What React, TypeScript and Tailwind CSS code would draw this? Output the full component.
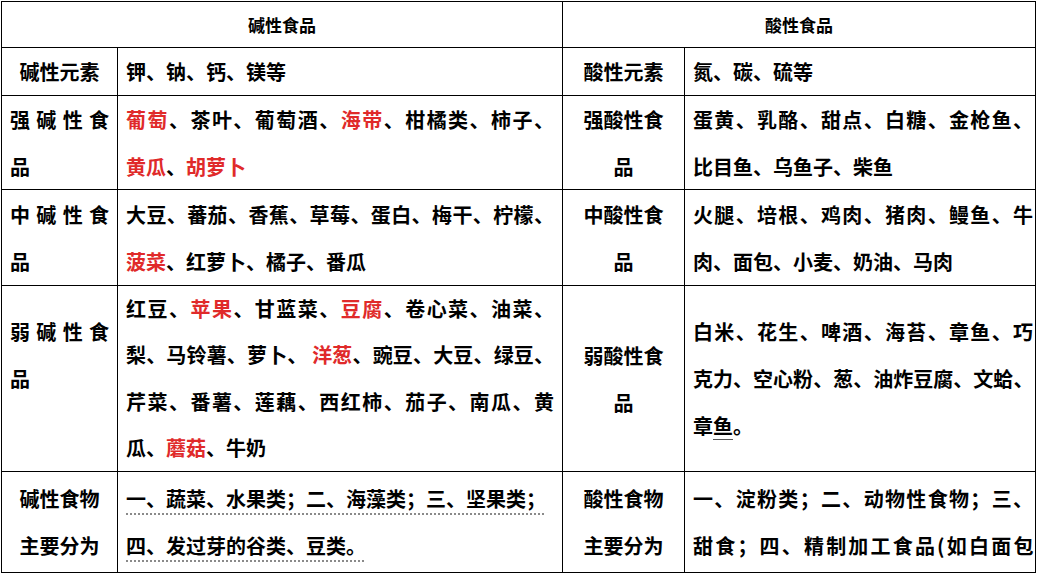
import type { ReactNode } from "react";

type Piece = string | { r: string };

// one printed line of a cell; "full" lines are stretched edge to edge like Word does
function Line({
  parts,
  full,
  tall,
  tight,
}: {
  parts: Piece[];
  full?: boolean;
  tall?: boolean;
  tight?: boolean;
}) {
  const base = tall ? "h-[46.5px] leading-[46.5px]" : "h-[47px] leading-[47px]";
  const align = full ? "text-justify [text-align-last:justify]" : "";
  return (
    <div className={`${base} ${align} whitespace-nowrap ${tight ? "tracking-[-0.4px]" : ""}`}>
      {parts.map((p, i) =>
        typeof p === "string" ? (
          <span key={i}>{p}</span>
        ) : (
          <span key={i} className="text-[#e02a2a]">
            {p.r}
          </span>
        ),
      )}
    </div>
  );
}

function Cell({
  children,
  center,
  span,
  pr,
}: {
  children: ReactNode;
  center?: boolean;
  span?: boolean;
  pr?: boolean;
}) {
  return (
    <div
      className={`flex flex-col justify-center border-r border-b border-black pl-2 ${pr ? "pr-[2px]" : "pr-2"} ${
        center ? "items-center text-center" : ""
      } ${span ? "col-span-2" : ""}`}
    >
      {children}
    </div>
  );
}

export default function App() {
  return (
    <div className="min-h-screen bg-white pt-[1px] pl-[1px] text-black [font-family:'Noto_Sans_CJK_SC','Liberation_Sans',sans-serif]">
      <div className="grid w-[1035px] grid-cols-[116px_445px_122px_351px] grid-rows-[46px_48px_94px_96px_186px_101px] border-t border-l border-black text-[20px] font-bold">
        {/* header */}
        <Cell center span>
          <div className="text-[17px] leading-[45px]">碱性食品</div>
        </Cell>
        <Cell center span>
          <div className="text-[17px] leading-[45px]">酸性食品</div>
        </Cell>

        {/* elements */}
        <Cell center>
          <Line parts={["碱性元素"]} />
        </Cell>
        <Cell>
          <Line parts={["钾、钠、钙、镁等"]} />
        </Cell>
        <Cell center>
          <Line parts={["酸性元素"]} />
        </Cell>
        <Cell>
          <Line parts={["氮、碳、硫等"]} />
        </Cell>

        {/* strong */}
        <Cell>
          <Line parts={["强碱性食"]} full />
          <Line parts={["品"]} />
        </Cell>
        <Cell>
          <Line
            parts={[{ r: "葡萄" }, "、茶叶、葡萄酒、", { r: "海带" }, "、柑橘类、柿子、"]}
            full
          />
          <Line parts={[{ r: "黄瓜" }, "、", { r: "胡萝卜" }]} />
        </Cell>
        <Cell center>
          <Line parts={["强酸性食"]} />
          <Line parts={["品"]} />
        </Cell>
        <Cell pr>
          <Line parts={["蛋黄、乳酪、甜点、白糖、金枪鱼、"]} full />
          <Line parts={["比目鱼、乌鱼子、柴鱼"]} />
        </Cell>

        {/* medium */}
        <Cell>
          <Line parts={["中碱性食"]} full />
          <Line parts={["品"]} />
        </Cell>
        <Cell>
          <Line parts={["大豆、蕃茄、香蕉、草莓、蛋白、梅干、柠檬、"]} full />
          <Line parts={[{ r: "菠菜" }, "、红萝卜、橘子、番瓜"]} />
        </Cell>
        <Cell center>
          <Line parts={["中酸性食"]} />
          <Line parts={["品"]} />
        </Cell>
        <Cell pr>
          <Line parts={["火腿、培根、鸡肉、猪肉、鳗鱼、牛"]} full />
          <Line parts={["肉、面包、小麦、奶油、马肉"]} />
        </Cell>

        {/* weak */}
        <Cell>
          <Line parts={["弱碱性食"]} full />
          <Line parts={["品"]} />
          <Line parts={[""]} />
        </Cell>
        <Cell>
          <Line
            parts={["红豆、", { r: "苹果" }, "、甘蓝菜、", { r: "豆腐" }, "、卷心菜、油菜、"]}
            full
            tall
          />
          <Line parts={["梨、马铃薯、萝卜、 ", { r: "洋葱" }, "、豌豆、大豆、绿豆、"]} full tall />
          <Line parts={["芹菜、番薯、莲藕、西红柿、茄子、南瓜、黄"]} full tall />
          <Line parts={["瓜、", { r: "蘑菇" }, "、牛奶"]} tall />
        </Cell>
        <Cell center>
          <Line parts={["弱酸性食"]} />
          <Line parts={["品"]} />
        </Cell>
        <Cell pr>
          <Line parts={["白米、花生、啤酒、海苔、章鱼、巧"]} full />
          <Line parts={["克力、空心粉、葱、油炸豆腐、文蛤、"]} full tight />
          <div className="h-[47px] leading-[47px] whitespace-nowrap">
            章<span className="underline decoration-[#555] decoration-1 underline-offset-[5px]">鱼</span>。
          </div>
        </Cell>

        {/* groups */}
        <Cell center>
          <Line parts={["碱性食物"]} />
          <Line parts={["主要分为"]} />
        </Cell>
        <Cell>
          <div className="h-[47px] leading-[47px] whitespace-nowrap">
            <span className="underline decoration-dotted decoration-[#8a8a8a] decoration-2 underline-offset-[6px]">
              一、蔬菜、水果类；二、海藻类；三、坚果类；
            </span>
          </div>
          <div className="h-[47px] leading-[47px] whitespace-nowrap">
            <span className="underline decoration-dotted decoration-[#8a8a8a] decoration-2 underline-offset-[6px]">
              四、发过芽的谷类、豆类。
            </span>
          </div>
        </Cell>
        <Cell center>
          <Line parts={["酸性食物"]} />
          <Line parts={["主要分为"]} />
        </Cell>
        <Cell pr>
          <Line parts={["一、淀粉类；二、动物性食物；三、"]} full />
          <Line parts={["甜食；四、精制加工食品(如白面包"]} full tight />
        </Cell>
      </div>
    </div>
  );
}
